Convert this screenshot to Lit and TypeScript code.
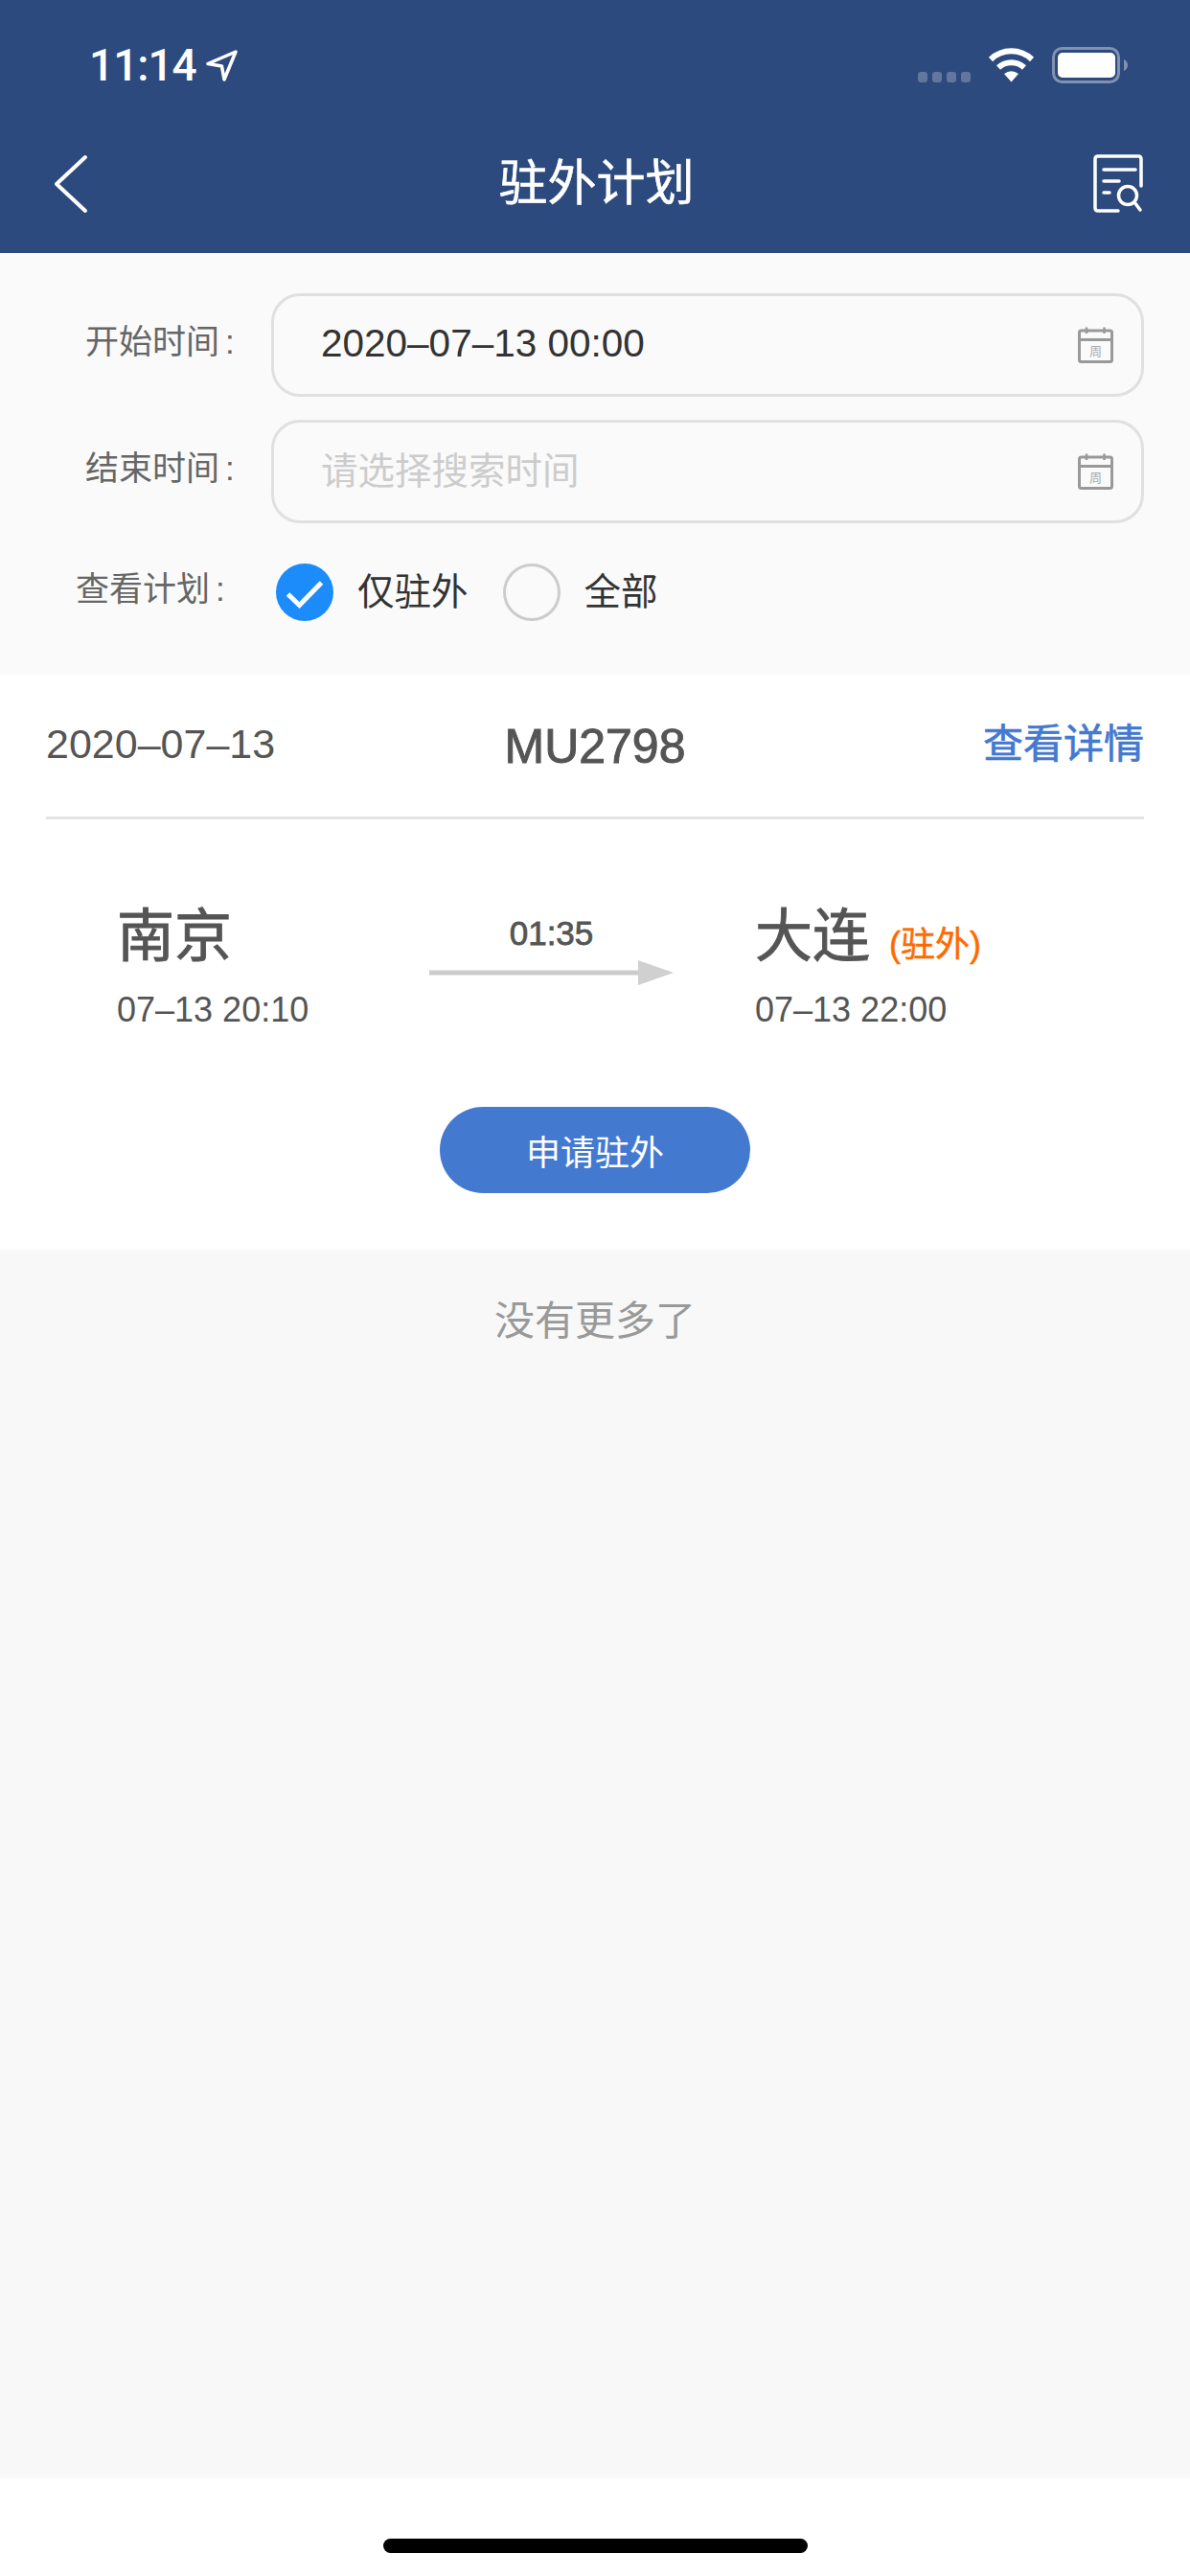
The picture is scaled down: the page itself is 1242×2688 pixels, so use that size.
import { LitElement, html, css, svg } from 'lit';
import { customElement } from 'lit/decorators.js';

const calendarIcon = html`
  <svg class="cal" width="37" height="38" viewBox="0 0 37 38">
    <rect x="1.5" y="4" width="34" height="32.5" rx="2" fill="none" stroke="#999" stroke-width="3"></rect>
    <path d="M1.5 13.5H35.5" stroke="#999" stroke-width="3"></path>
    <path d="M9 0.5V7M27.5 0.5V7" stroke="#999" stroke-width="2.5"></path>
    ${svg`<text x="18.5" y="30" font-size="13" fill="#aaa" text-anchor="middle" font-family="'Noto Sans CJK SC', sans-serif">周</text>`}
  </svg>
`;

@customElement('app-root')
export class AppRoot extends LitElement {
  static styles = css`
    :host {
      display: flex;
      flex-direction: column;
      width: 1242px;
      height: 2688px;
      background: #fff;
      font-family: 'Liberation Sans', 'Noto Sans CJK SC', sans-serif;
      color: #333;
    }
    svg {
      display: block;
      flex: none;
    }

    /* header */
    .header {
      height: 264px;
      background: #2c4a7e;
      color: #fff;
      flex: none;
    }
    .status {
      height: 120px;
      box-sizing: border-box;
      padding: 49px 65px 0 93px;
      display: flex;
      align-items: flex-start;
    }
    .clock {
      font-family: 'Roboto', sans-serif;
      font-size: 46px;
      font-weight: 500;
      line-height: 38px;
      letter-spacing: -1px;
    }
    .arrow-loc {
      margin: 3px 0 0 9px;
    }
    .status-right {
      margin-left: auto;
      display: flex;
      align-items: flex-start;
    }
    .dots {
      display: flex;
      gap: 5px;
      margin: 26px 18px 0 0;
    }
    .dots i {
      width: 10px;
      height: 11px;
      border-radius: 3px;
      background: rgba(255, 255, 255, 0.25);
    }
    .wifi {
      margin-right: 18px;
    }
    .nav {
      height: 144px;
      display: grid;
      grid-template-columns: 1fr auto 1fr;
      align-items: center;
      padding: 0 49px 0 56px;
    }
    .title {
      font-size: 51px;
      line-height: 60px;
      -webkit-text-stroke: 0.6px #fff;
      transform: translateX(-2px);
    }
    .doc {
      justify-self: end;
    }

    /* filter form */
    .form {
      background: #fafafa;
      padding: 42px 48px 56px 0;
      display: flex;
      flex-direction: column;
      gap: 24px;
      flex: none;
    }
    .row {
      display: flex;
      align-items: center;
    }
    .label {
      width: 283px;
      box-sizing: border-box;
      padding: 0 0 6px 89px;
      font-size: 35px;
      line-height: 44px;
      color: #666;
      white-space: nowrap;
    }
    .colon {
      margin-left: 6px;
    }
    .input {
      flex: 1;
      height: 108px;
      box-sizing: border-box;
      border: 3px solid #e0e0e0;
      border-radius: 30px;
      padding: 0 29px 0 49px;
      display: flex;
      align-items: center;
      justify-content: space-between;
      font-size: 40.5px;
      color: #333;
    }
    .input span {
      padding-bottom: 4px;
    }
    .input .placeholder {
      font-size: 38.5px;
      color: #ccc;
      padding-bottom: 8px;
    }
    .row.plan {
      height: 60px;
      margin-top: 18px;
    }
    .row.plan .label {
      padding-left: 79px;
    }
    .radio {
      width: 60px;
      height: 60px;
      margin: 0 25px 0 5px;
    }
    .opt {
      font-size: 38.5px;
      line-height: 48px;
      color: #333;
      margin-right: 36px;
    }
    .radio.off {
      margin: 0 25px 0 0;
    }

    /* flight card */
    .card {
      background: #fff;
      height: 600px;
      box-sizing: border-box;
      flex: none;
    }
    .card-head {
      margin: 0 48px;
      height: 151px;
      box-sizing: border-box;
      border-bottom: 3px solid #e5e5e5;
      display: grid;
      grid-template-columns: 1fr auto 1fr;
      color: #555;
    }
    .date {
      font-size: 43px;
      line-height: 50px;
      margin-top: 47px;
    }
    .flight {
      font-size: 50px;
      line-height: 56px;
      margin-top: 47px;
      -webkit-text-stroke: 1px #555;
    }
    .detail {
      justify-self: end;
      font-size: 42px;
      line-height: 50px;
      color: #4479d0;
      margin-top: 48px;
      -webkit-text-stroke: 0.7px #4479d0;
    }
    .route {
      display: flex;
      align-items: flex-start;
      padding: 88px 0 0 122px;
      color: #555;
    }
    .end {
      width: 326px;
    }
    .end.to {
      width: auto;
      margin-left: 85px;
    }
    .city {
      font-size: 60px;
      line-height: 70px;
      -webkit-text-stroke: 0.9px #555;
      display: flex;
      align-items: baseline;
    }
    .tag {
      font-size: 36px;
      line-height: 40px;
      color: #ff6a00;
      margin-left: 20px;
      -webkit-text-stroke: 0.5px #ff6a00;
    }
    .when {
      font-size: 36px;
      line-height: 42px;
      margin-top: 20px;
    }
    .mid {
      width: 255px;
      padding-top: 10px;
    }
    .dur {
      font-size: 35px;
      line-height: 42px;
      text-align: center;
      margin-bottom: 7px;
      -webkit-text-stroke: 0.8px #555;
    }
    .apply-wrap {
      display: flex;
      justify-content: center;
      margin-top: 80px;
    }
    .apply {
      width: 324px;
      height: 90px;
      border-radius: 45px;
      background: #4479d0;
      color: #fff;
      font-size: 36px;
      display: flex;
      align-items: center;
      justify-content: center;
    }

    /* list end + home bar */
    .list {
      flex: 1;
      background: #f8f8f8;
      text-align: center;
      font-size: 42px;
      color: #999;
      padding-top: 50px;
      line-height: 50px;
    }
    .home {
      height: 102px;
      flex: none;
      display: flex;
      justify-content: center;
      padding-top: 63px;
      box-sizing: border-box;
    }
    .home i {
      width: 443px;
      height: 15px;
      border-radius: 8px;
      background: #000;
    }
  `;

  render() {
    return html`
      <div class="header">
        <div class="status">
          <div class="clock">11:14</div>
          <svg class="arrow-loc" width="34" height="33" viewBox="0 0 34 33">
            <path d="M32 2 3 14.5 17.5 17 20 31Z" fill="none" stroke="#fff" stroke-width="3.5" stroke-linejoin="round"></path>
          </svg>
          <div class="status-right">
            <div class="dots"><i></i><i></i><i></i><i></i></div>
            <svg class="wifi" width="49" height="37" viewBox="0 0 49 37">
              <path d="M3 13A31 31 0 0 1 46 13" fill="none" stroke="#fff" stroke-width="6"></path>
              <path d="M11 21.5A20 20 0 0 1 38 21.5" fill="none" stroke="#fff" stroke-width="6"></path>
              <path d="M24.5 36.5 17 28Q24.5 22.5 32 28Z" fill="#fff"></path>
            </svg>
            <svg width="79" height="38" viewBox="0 0 79 38">
              <rect x="1.5" y="1.5" width="68" height="35" rx="9" fill="none" stroke="#fff" stroke-opacity="0.4" stroke-width="3"></rect>
              <rect x="6" y="6" width="60" height="26" rx="5" fill="#fff"></rect>
              <path d="M75 13Q79 15 79 19Q79 23 75 25Z" fill="#fff" fill-opacity="0.4"></path>
            </svg>
          </div>
        </div>
        <div class="nav">
          <svg width="36" height="62" viewBox="0 0 36 62">
            <path d="M33 3 3 31 33 59" fill="none" stroke="#fff" stroke-width="4" stroke-linecap="round" stroke-linejoin="round"></path>
          </svg>
          <div class="title">驻外计划</div>
          <svg class="doc" width="52" height="62" viewBox="0 0 52 62">
            <path d="M50 33V5Q50 2 47 2H5Q2 2 2 5V56Q2 59 5 59H26" fill="none" stroke="#fff" stroke-width="3.5" stroke-linecap="round"></path>
            <path d="M11 16H44M11 28H27M11 40H17" fill="none" stroke="#fff" stroke-width="3.5" stroke-linecap="round"></path>
            <circle cx="36" cy="43" r="9.5" fill="none" stroke="#fff" stroke-width="3.5"></circle>
            <path d="M43 50 49 58" fill="none" stroke="#fff" stroke-width="3.5" stroke-linecap="round"></path>
          </svg>
        </div>
      </div>

      <div class="form">
        <div class="row">
          <div class="label">开始时间<span class="colon">:</span></div>
          <div class="input"><span>2020–07–13 00:00</span>${calendarIcon}</div>
        </div>
        <div class="row">
          <div class="label">结束时间<span class="colon">:</span></div>
          <div class="input"><span class="placeholder">请选择搜索时间</span>${calendarIcon}</div>
        </div>
        <div class="row plan">
          <div class="label">查看计划<span class="colon">:</span></div>
          <svg class="radio" viewBox="0 0 60 60">
            <circle cx="30" cy="30" r="30" fill="#1b8cfa"></circle>
            <path d="M12.5 32 24.5 43.5 47.5 20" fill="none" stroke="#fff" stroke-width="5"></path>
          </svg>
          <div class="opt">仅驻外</div>
          <svg class="radio off" viewBox="0 0 60 60">
            <circle cx="30" cy="30" r="28.5" fill="none" stroke="#ccc" stroke-width="3"></circle>
          </svg>
          <div class="opt">全部</div>
        </div>
      </div>

      <div class="card">
        <div class="card-head">
          <div class="date">2020–07–13</div>
          <div class="flight">MU2798</div>
          <div class="detail">查看详情</div>
        </div>
        <div class="route">
          <div class="end">
            <div class="city">南京</div>
            <div class="when">07–13 20:10</div>
          </div>
          <div class="mid">
            <div class="dur">01:35</div>
            <svg width="255" height="26" viewBox="0 0 255 26">
              <path d="M0 13H220" stroke="#ccc" stroke-width="5"></path>
              <path d="M218 0 255 13 218 26Z" fill="#d0d0d0"></path>
            </svg>
          </div>
          <div class="end to">
            <div class="city">大连<span class="tag">(驻外)</span></div>
            <div class="when">07–13 22:00</div>
          </div>
        </div>
        <div class="apply-wrap"><div class="apply">申请驻外</div></div>
      </div>

      <div class="list">没有更多了</div>
      <div class="home"><i></i></div>
    `;
  }
}
